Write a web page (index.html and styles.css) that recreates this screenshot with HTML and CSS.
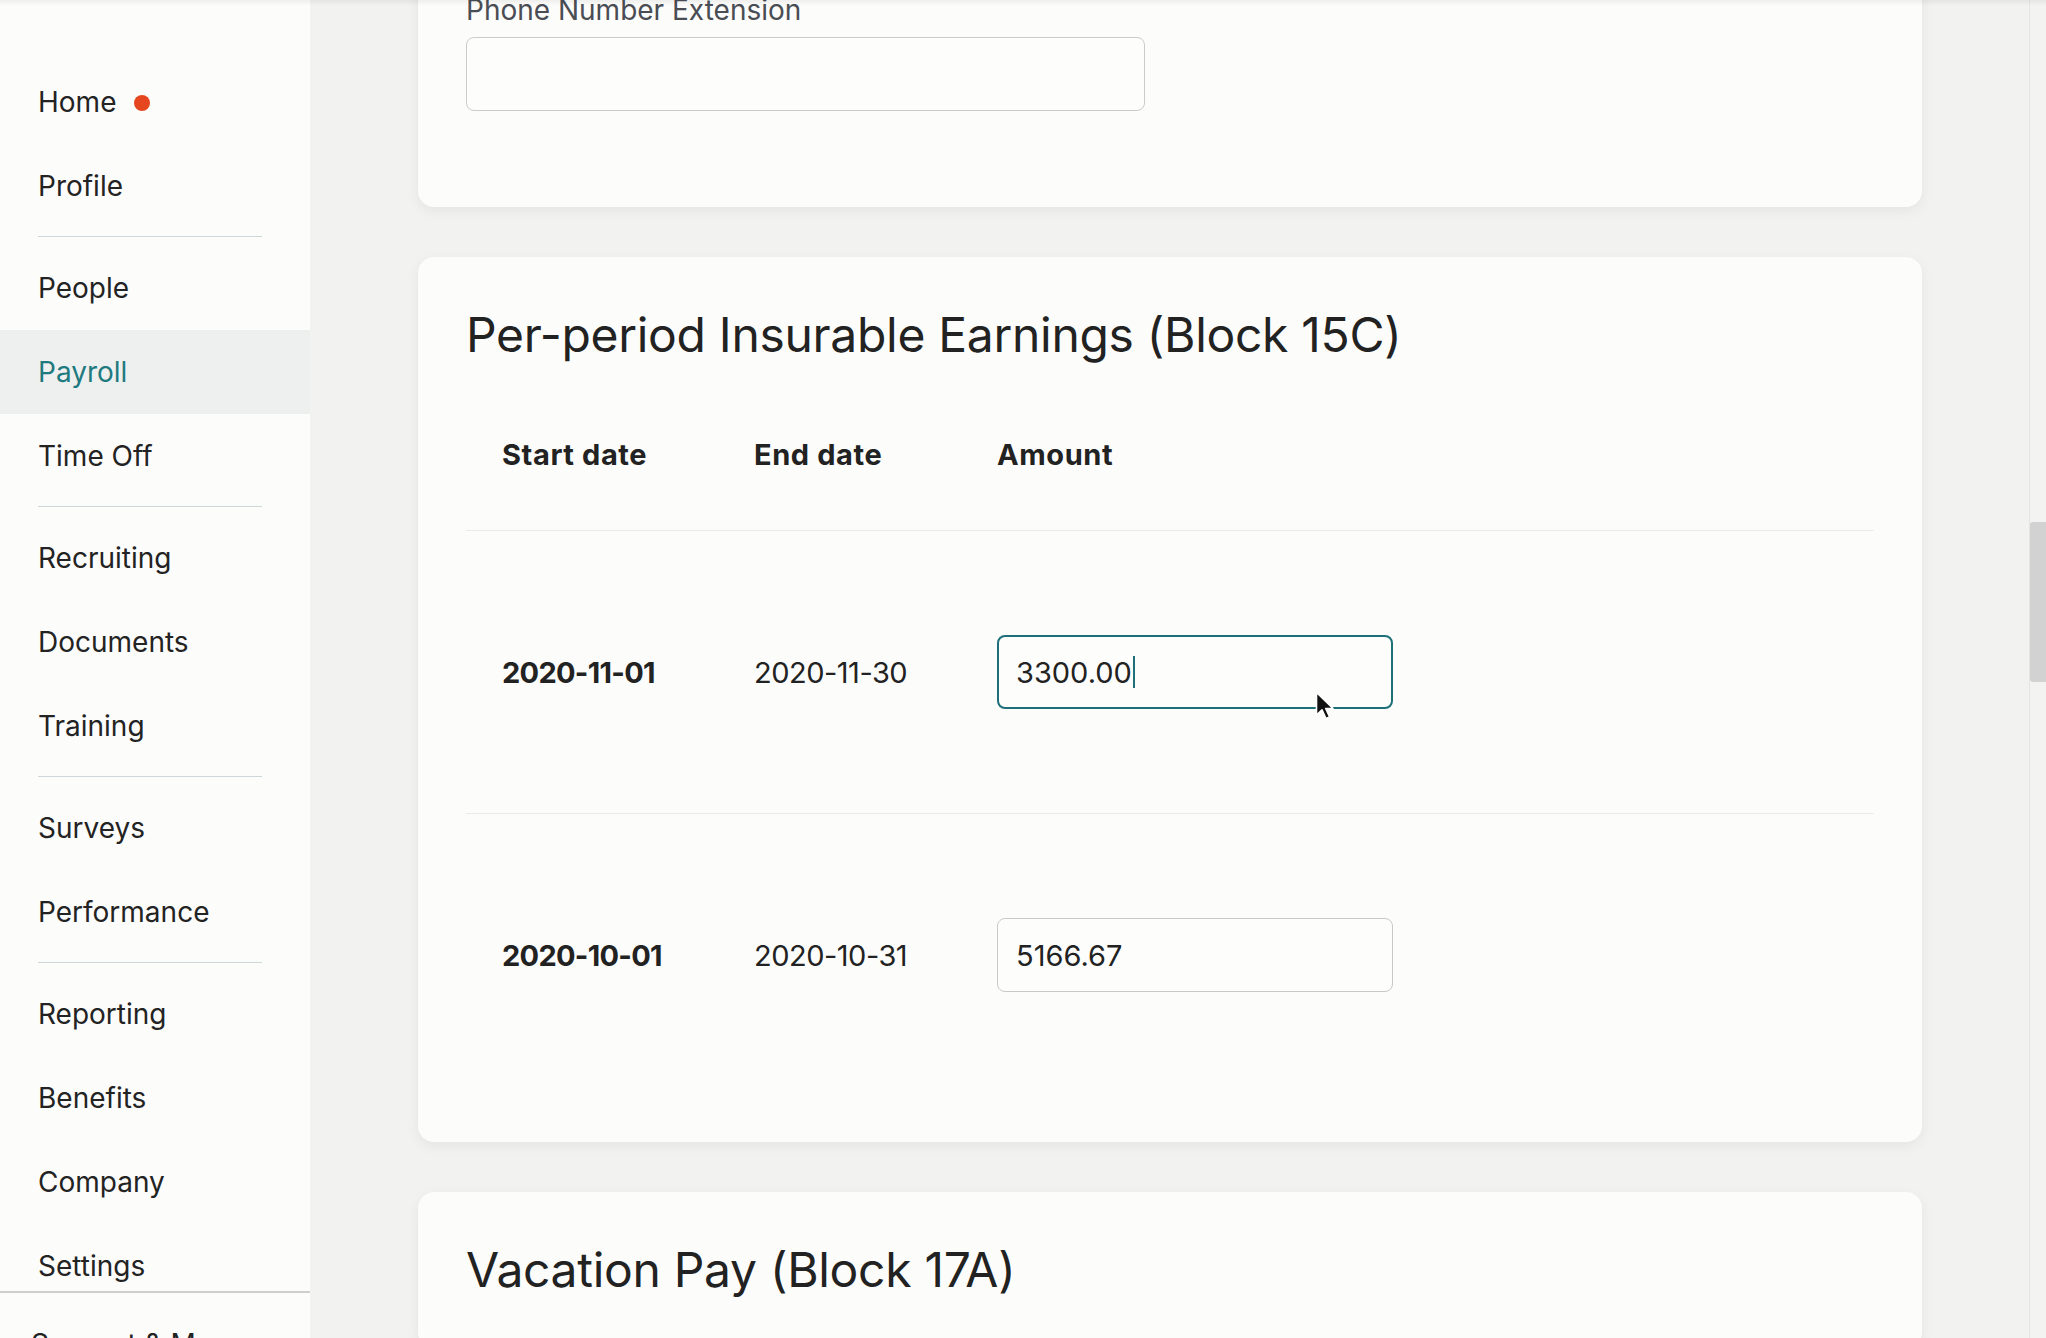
FILE: index.html
```html
<!DOCTYPE html>
<html lang="en">
<head>
<meta charset="utf-8">
<title>Payroll – Record of Employment</title>
<link rel="stylesheet" href="styles.css">
</head>
<body>
<div class="top-shade"></div>
<div class="app">
  <aside class="sidebar">
    <nav class="nav">
      <a class="nav-item">Home <span class="dot"></span></a>
      <a class="nav-item">Profile</a>
      <hr class="nav-divider">
      <a class="nav-item">People</a>
      <a class="nav-item active">Payroll</a>
      <a class="nav-item">Time Off</a>
      <hr class="nav-divider">
      <a class="nav-item">Recruiting</a>
      <a class="nav-item">Documents</a>
      <a class="nav-item">Training</a>
      <hr class="nav-divider">
      <a class="nav-item">Surveys</a>
      <a class="nav-item">Performance</a>
      <hr class="nav-divider">
      <a class="nav-item">Reporting</a>
      <a class="nav-item">Benefits</a>
      <a class="nav-item">Company</a>
      <a class="nav-item">Settings</a>
    </nav>
    <div class="sidebar-footer"><span>Support &amp; More</span></div>
  </aside>

  <main class="main">
    <section class="card card-first">
      <label class="field-label">Phone Number Extension</label>
      <div class="text-field"></div>
    </section>

    <section class="card card-table">
      <h2 class="card-title">Per-period Insurable Earnings (Block 15C)</h2>
      <div class="earnings">
        <div class="earn-row earn-head">
          <div class="cell">Start date</div>
          <div class="cell">End date</div>
          <div class="cell">Amount</div>
        </div>
        <div class="earn-row">
          <div class="cell date strong">2020-11-01</div>
          <div class="cell date">2020-11-30</div>
          <div class="cell"><div class="amount focused">3300.00<span class="caret"></span></div></div>
        </div>
        <div class="earn-row last">
          <div class="cell date strong">2020-10-01</div>
          <div class="cell date">2020-10-31</div>
          <div class="cell"><div class="amount">5166.67</div></div>
        </div>
      </div>
    </section>

    <section class="card">
      <h2 class="card-title">Vacation Pay (Block 17A)</h2>
    </section>
  </main>

  <div class="scrollbar"><div class="scroll-thumb"></div></div>
</div>

<svg class="pointer" width="20" height="32" viewBox="0 0 20 32" aria-hidden="true">
  <path d="M1.5 1.5 L1.5 24 L7 18.8 L11 27.5 L14.6 26 L10.7 17.5 L18 17.5 Z" fill="#111" stroke="#fff" stroke-width="1.6" stroke-linejoin="round"/>
</svg>
</body>
</html>
```

FILE: styles.css
```css
* { box-sizing: border-box; }

html, body {
  margin: 0;
  padding: 0;
  height: 100%;
  overflow: hidden;
}

body {
  font-family: Inter, "Liberation Sans", Arial, sans-serif;
  color: #222222;
  background: #f2f2f0;
}

.top-shade {
  position: fixed;
  top: 0;
  left: 0;
  right: 0;
  height: 6px;
  background: linear-gradient(rgba(0, 0, 0, 0.05), rgba(0, 0, 0, 0));
  z-index: 5;
  pointer-events: none;
}

.app {
  display: flex;
  height: 1338px;
  overflow: hidden;
}

/* Sidebar */
.sidebar {
  width: 310px;
  flex: none;
  display: flex;
  flex-direction: column;
  background: #fcfcfb;
}

.nav {
  flex: 1;
  overflow: hidden;
  padding-top: 60px;
  display: flex;
  flex-direction: column;
}

.nav-item {
  flex: none;
  display: flex;
  align-items: center;
  height: 84px;
  padding-left: 38px;
  font-size: 28px;
  color: #232323;
  text-decoration: none;
}

.nav-item.active {
  background: #eef0ef;
  color: #1f7a80;
}

.dot {
  width: 16px;
  height: 16px;
  border-radius: 50%;
  background: #e5461f;
  margin-left: 18px;
  margin-top: 2px;
}

.nav-divider {
  flex: none;
  border: 0;
  height: 1px;
  width: 224px;
  background: #cdd7d9;
  margin: 8px 0 9px 38px;
}

.sidebar-footer {
  flex: none;
  height: 47px;
  border-top: 2px solid #cfcfcf;
  padding: 34px 0 0 31px;
  overflow: hidden;
  font-size: 28px;
  line-height: 34px;
  white-space: nowrap;
}

/* Main column */
.main {
  flex: 1;
  min-width: 0;
  display: flex;
  flex-direction: column;
  gap: 50px;
  padding: 0 107px 0 108px;
  overflow: hidden;
}

.card {
  flex: none;
  background: #fcfcfa;
  border-radius: 16px;
  padding: 48px;
  box-shadow: 0 4px 14px rgba(0, 0, 0, 0.06);
}

.card-table {
  padding-bottom: 46px;
}

.card-first {
  margin-top: -55px;
}

.field-label {
  display: block;
  font-size: 28px;
  line-height: 34px;
  color: #4a4d54;
  margin-bottom: 10px;
}

.text-field {
  width: 679px;
  height: 74px;
  border: 1.5px solid #cbcbcb;
  border-radius: 8px;
  background: #fdfdfc;
  margin-bottom: 48px;
}

.card-title {
  margin: 0;
  font-size: 48px;
  line-height: 60px;
  font-weight: 400;
  letter-spacing: -0.3px;
  color: #222222;
}

.earnings {
  margin-top: 14px;
}

.earn-row {
  display: grid;
  grid-template-columns: 252px 243px 1fr;
  align-items: center;
  height: 283px;
  border-bottom: 1px solid #ebeae6;
  font-size: 29px;
}

.earn-row.last {
  height: 282px;
  border-bottom: 0;
}

.earn-head {
  height: 152px;
  font-weight: 700;
  font-size: 29px;
  letter-spacing: 0.6px;
}

.cell {
  padding-left: 36px;
}

.cell.date {
  letter-spacing: -0.5px;
}

.cell.strong {
  font-weight: 700;
  letter-spacing: -0.7px;
}

.amount {
  width: 396px;
  height: 74px;
  border: 1.5px solid #c9c9c9;
  border-radius: 8px;
  background: #fdfdfc;
  display: flex;
  align-items: center;
  padding: 0 18px;
  font-size: 29px;
}

.amount.focused {
  border: 2px solid #1d6f78;
  padding: 0 17px;
}

.caret {
  display: inline-block;
  width: 2px;
  height: 32px;
  margin-left: 1px;
  background: #1d6f78;
}

/* Scrollbar */
.scrollbar {
  flex: none;
  width: 17px;
  border-left: 1px solid #e4e4e2;
  background: #f3f3f2;
}

.scroll-thumb {
  margin-top: 522px;
  height: 160px;
  background: #d2d2d2;
  border-radius: 3px 0 0 3px;
}

/* Mouse pointer in the capture */
.pointer {
  position: fixed;
  left: 1315px;
  top: 691px;
  z-index: 10;
}
```
